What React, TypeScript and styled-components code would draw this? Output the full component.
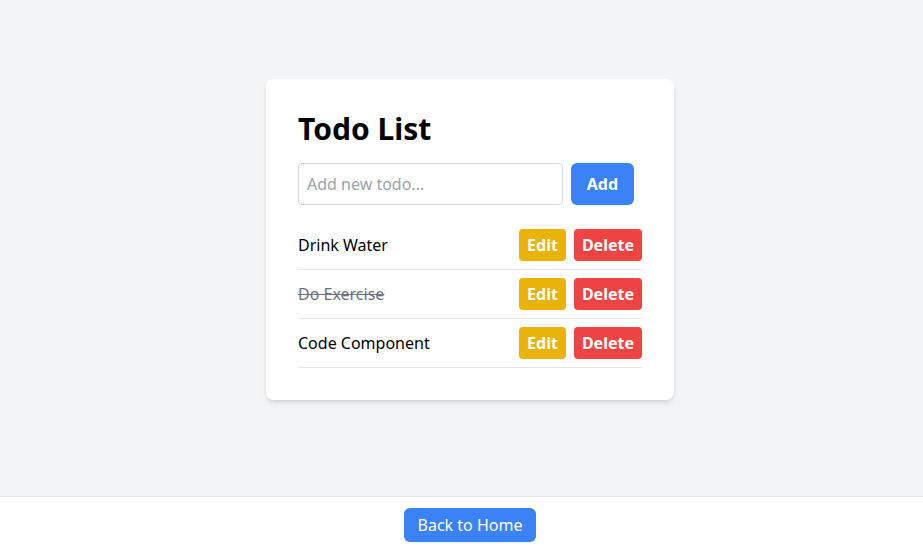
import React, { useState } from "react";
import styled, { createGlobalStyle, css } from "styled-components";

const Global = createGlobalStyle`
  html, body { margin: 0; padding: 0; }
  body {
    background: #f3f4f6;
    font-family: "Noto Sans", "Open Sans", sans-serif;
    color: #000;
  }
  * { box-sizing: border-box; }
`;

const Page = styled.div`
  min-height: 100vh;
  display: flex;
  flex-direction: column;
`;

const Main = styled.main`
  flex: 1;
  display: flex;
  justify-content: center;
  align-items: flex-start;
  padding: 79px 0 0 17px;
`;

const Card = styled.section`
  width: 408px;
  background: #fff;
  border-radius: 8px;
  padding: 32px;
  box-shadow: 0 4px 6px -1px rgba(0, 0, 0, 0.1), 0 2px 4px -2px rgba(0, 0, 0, 0.1);
`;

const Title = styled.h1`
  margin: 0 0 16px;
  font-size: 30px;
  line-height: 36px;
  font-weight: 700;
`;

const AddRow = styled.div`
  display: flex;
  gap: 8px;
  width: 336px;
  margin-bottom: 16px;
`;

const Input = styled.input`
  flex: 1;
  min-width: 0;
  height: 42px;
  padding: 8px;
  border: 1px solid #d1d5db;
  border-radius: 4px;
  font-family: inherit;
  font-size: 16px;
  line-height: 24px;
  color: #111827;
  outline: none;
  &::placeholder { color: #9ca3af; }
`;

const variants = {
  blue: "#3b82f6",
  yellow: "#eab308",
  red: "#ef4444",
};

const Button = styled.button<{ $tone: keyof typeof variants; $size?: "lg" | "sm" | "nav" }>`
  border: none;
  border-radius: 6px;
  background: ${(p) => variants[p.$tone]};
  color: #fff;
  font-family: inherit;
  font-size: 16px;
  line-height: 24px;
  font-weight: 700;
  cursor: pointer;
  ${(p) =>
    p.$size === "lg"
      ? css`
          height: 42px;
          padding: 0 16px;
        `
      : p.$size === "nav"
      ? css`
          height: 34px;
          padding: 0 14px;
          font-weight: 400;
        `
      : css`
          height: 32px;
          padding: 0 8px;
          border-radius: 4px;
        `}
`;

const List = styled.ul`
  list-style: none;
  margin: 0;
  padding: 0;
`;

const Item = styled.li`
  display: flex;
  align-items: center;
  justify-content: space-between;
  padding: 8px 0;
  border-bottom: 1px solid #e5e7eb;
`;

const Label = styled.span<{ $done?: boolean }>`
  font-size: 16px;
  line-height: 24px;
  ${(p) =>
    p.$done &&
    css`
      text-decoration: line-through;
      color: #6b7280;
    `}
`;

const Actions = styled.div`
  display: flex;
  gap: 8px;
`;

const Footer = styled.footer`
  background: #fff;
  border-top: 1px solid #e5e7eb;
  display: flex;
  justify-content: center;
  padding: 11px 0 11px 17px;
`;

export default function App() {
  const [todos] = useState([
    { id: 1, text: "Drink Water", done: false },
    { id: 2, text: "Do Exercise", done: true },
    { id: 3, text: "Code Component", done: false },
  ]);
  return (
    <Page>
      <Global />
      <Main>
        <Card>
          <Title>Todo List</Title>
          <AddRow>
            <Input placeholder="Add new todo..." />
            <Button $tone="blue" $size="lg">Add</Button>
          </AddRow>
          <List>
            {todos.map((t) => (
              <Item key={t.id}>
                <Label $done={t.done}>{t.text}</Label>
                <Actions>
                  <Button $tone="yellow">Edit</Button>
                  <Button $tone="red">Delete</Button>
                </Actions>
              </Item>
            ))}
          </List>
        </Card>
      </Main>
      <Footer>
        <Button $tone="blue" $size="nav">Back to Home</Button>
      </Footer>
    </Page>
  );
}
